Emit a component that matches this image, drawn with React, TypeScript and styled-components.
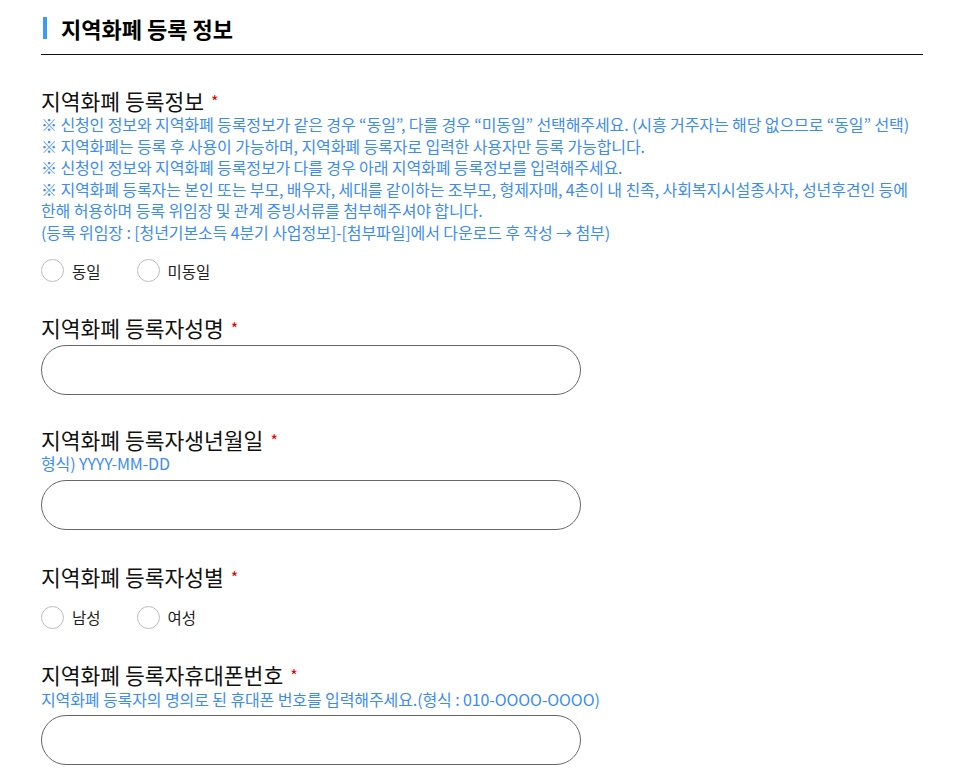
import React from 'react';
import styled, { createGlobalStyle } from 'styled-components';

const GlobalStyle = createGlobalStyle`
  body {
    margin: 0;
    background: #fff;
    font-family: "Noto Sans CJK KR", "Noto Sans", sans-serif;
    color: #111;
  }
`;

const Page = styled.div`
  width: 882px;
  padding: 14px 0 0 41px;
`;

const TitleBar = styled.div`
  display: flex;
  align-items: center;
  gap: 14px;
  padding: 0 0 12px 2px;
  border-bottom: 1px solid #111;
`;

const Accent = styled.span`
  width: 4px;
  height: 22px;
  background: #3a9cf5;
`;

const Title = styled.h2`
  margin: 0;
  font-size: 22px;
  font-weight: 700;
  line-height: 28px;
  color: #000;
`;

const Section = styled.div<{ $top: number }>`
  margin-top: ${(p) => p.$top}px;
`;

const Label = styled.div`
  font-size: 21.5px;
  line-height: 26px;
  color: #111;
  display: flex;
  align-items: center;
`;

const Star = styled.span`
  color: #e60000;
  font-size: 16px;
  margin-left: 7px;
`;

const Hint = styled.div<{ $top?: number }>`
  margin-top: ${(p) => p.$top ?? 0}px;
  font-size: 16px;
  line-height: 21.5px;
  color: #3b8cf3;
  letter-spacing: -0.1px;
`;

const RadioRow = styled.div<{ $top: number }>`
  display: flex;
  gap: 36px;
  margin-top: ${(p) => p.$top}px;
`;

const RadioItem = styled.label`
  display: flex;
  align-items: center;
  gap: 8px;
  font-size: 15.5px;
  color: #222;
`;

const Circle = styled.span`
  width: 23px;
  height: 23px;
  border: 1px solid #bdbdbd;
  border-radius: 50%;
  box-sizing: border-box;
`;

const Input = styled.input<{ $top: number }>`
  display: block;
  box-sizing: border-box;
  width: 540px;
  height: 50px;
  margin-top: ${(p) => p.$top}px;
  border: 1px solid #666;
  border-radius: 25px;
  outline: none;
  padding: 0 20px;
  font-family: inherit;
  font-size: 15px;
`;

const Radio = ({ label }: { label: string }) => (
  <RadioItem>
    <Circle />
    {label}
  </RadioItem>
);

export default function App() {
  return (
    <>
      <GlobalStyle />
      <Page>
        <TitleBar>
          <Accent />
          <Title>지역화폐 등록 정보</Title>
        </TitleBar>

        <Section $top={33}>
          <Label>
            지역화폐 등록정보<Star>*</Star>
          </Label>
          <Hint>
            ※ 신청인 정보와 지역화폐 등록정보가 같은 경우 “동일”, 다를 경우 “미동일” 선택해주세요. (시흥 거주자는 해당 없으므로 “동일” 선택)
            <br />
            ※ 지역화폐는 등록 후 사용이 가능하며, 지역화폐 등록자로 입력한 사용자만 등록 가능합니다.
            <br />
            ※ 신청인 정보와 지역화폐 등록정보가 다를 경우 아래 지역화폐 등록정보를 입력해주세요.
            <br />
            ※ 지역화폐 등록자는 본인 또는 부모, 배우자, 세대를 같이하는 조부모, 형제자매, 4촌이 내 친족, 사회복지시설종사자, 성년후견인 등에 한해 허용하며 등록 위임장 및 관계 증빙서류를 첨부해주셔야 합니다.
            <br />
            (등록 위임장 : [청년기본소득 4분기 사업정보]-[첨부파일]에서 다운로드 후 작성 → 첨부)
          </Hint>
          <RadioRow $top={16}>
            <Radio label="동일" />
            <Radio label="미동일" />
          </RadioRow>
        </Section>

        <Section $top={33}>
          <Label>
            지역화폐 등록자성명<Star>*</Star>
          </Label>
          <Input $top={4} />
        </Section>

        <Section $top={32}>
          <Label>
            지역화폐 등록자생년월일<Star>*</Star>
          </Label>
          <Hint>형식) YYYY-MM-DD</Hint>
          <Input $top={5} />
        </Section>

        <Section $top={34}>
          <Label>
            지역화폐 등록자성별<Star>*</Star>
          </Label>
          <RadioRow $top={16}>
            <Radio label="남성" />
            <Radio label="여성" />
          </RadioRow>
        </Section>

        <Section $top={33}>
          <Label>
            지역화폐 등록자휴대폰번호<Star>*</Star>
          </Label>
          <Hint $top={1}>지역화폐 등록자의 명의로 된 휴대폰 번호를 입력해주세요.(형식 : 010-OOOO-OOOO)</Hint>
          <Input $top={5} />
        </Section>
      </Page>
    </>
  );
}
